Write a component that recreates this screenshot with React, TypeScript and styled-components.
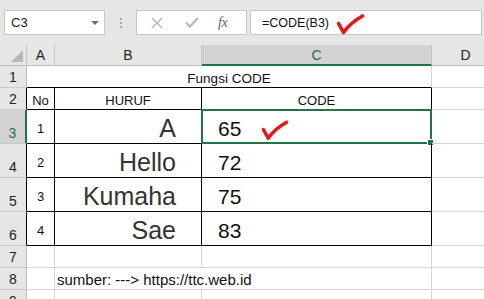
import React from 'react';
import styled, { createGlobalStyle } from 'styled-components';

const GlobalStyle = createGlobalStyle`
  html, body {
    margin: 0;
    padding: 0;
    background: #ffffff;
    overflow: hidden;
  }
  body {
    font-family: "Liberation Sans", Arial, sans-serif;
  }
`;

const green = '#217346';
const grid = '#d4d4d4';

const Window = styled.div`
  width: 484px;
  height: 299px;
  overflow: hidden;
  background: #ffffff;
`;

const TopBar = styled.div`
  height: 45px;
  background: #e6e6e6;
  display: flex;
  align-items: flex-start;
  padding: 10px 2px 0 4px;
  box-sizing: border-box;
`;

const NameBox = styled.div`
  width: 101px;
  height: 25px;
  box-sizing: border-box;
  background: #fff;
  border: 1px solid #c6c6c6;
  display: flex;
  align-items: center;
  justify-content: space-between;
  padding: 0 5px 0 6px;
  font-size: 13px;
  color: #222;
`;

const DropArrow = styled.span`
  width: 0;
  height: 0;
  border-left: 4px solid transparent;
  border-right: 4px solid transparent;
  border-top: 4px solid #6f6f6f;
`;

const Grip = styled.div`
  width: 31px;
  height: 25px;
  display: flex;
  flex-direction: column;
  align-items: center;
  justify-content: center;
  gap: 2px;
  span {
    width: 2px;
    height: 2px;
    background: #a8a8a8;
  }
`;

const FormulaButtons = styled.div`
  width: 111px;
  height: 25px;
  box-sizing: border-box;
  background: #fff;
  border: 1px solid #c6c6c6;
  display: flex;
  align-items: center;
  padding-left: 14px;
  gap: 22px;
  svg {
    display: block;
  }
`;

const Fx = styled.span`
  font-family: "Liberation Serif", "Times New Roman", serif;
  font-style: italic;
  font-size: 14px;
  color: #666;
  margin-left: -3px;
  letter-spacing: -0.5px;
`;

const FormulaInput = styled.div`
  flex: 1;
  height: 25px;
  margin-left: 3px;
  box-sizing: border-box;
  background: #fff;
  border: 1px solid #c6c6c6;
  display: flex;
  align-items: center;
  padding-left: 11px;
  font-size: 12.5px;
  color: #111;
`;

const Sheet = styled.div`
  display: grid;
  grid-template-columns: 27px 28px 147px 230px 68px;
  grid-template-rows: 21px 22px 22px 34px 34px 34px 34px 22px 22px 22px;
  width: 500px;
`;

const ColHead = styled.div<{ $sel?: boolean }>`
  box-sizing: border-box;
  background: ${p => (p.$sel ? '#d2d2d2' : '#e6e6e6')};
  border-right: 1px solid #c3c3c3;
  border-bottom: ${p => (p.$sel ? `2px solid ${green}` : '1px solid #bdbdbd')};
  display: flex;
  align-items: center;
  justify-content: center;
  font-size: 14px;
  color: ${p => (p.$sel ? green : '#222')};
`;

const Corner = styled.div`
  box-sizing: border-box;
  background: #e6e6e6;
  border-right: 1px solid #c3c3c3;
  border-bottom: 1px solid #bdbdbd;
  position: relative;
  &::after {
    content: '';
    position: absolute;
    right: 3px;
    bottom: 3px;
    width: 0;
    height: 0;
    border-left: 12px solid transparent;
    border-bottom: 12px solid #b8b8b8;
  }
`;

const RowHead = styled.div<{ $sel?: boolean; $edge?: boolean }>`
  box-sizing: border-box;
  background: ${p => (p.$sel ? '#d2d2d2' : '#e6e6e6')};
  border-bottom: 1px solid #c9c9c9;
  border-right: ${p =>
    p.$sel ? `2px solid ${green}` : p.$edge ? '1px solid #000' : '1px solid #bdbdbd'};
  display: flex;
  align-items: flex-end;
  justify-content: center;
  padding-bottom: 2px;
  font-size: 14px;
  color: ${p => (p.$sel ? green : '#222')};
`;

const Cell = styled.div<{
  $span?: number;
  $box?: boolean;
  $top?: boolean;
  $open?: boolean;
  $align?: 'left' | 'center' | 'right';
  $pb?: number;
}>`
  box-sizing: border-box;
  grid-column: span ${p => p.$span ?? 1};
  border-right: ${p => (p.$open ? 'none' : `1px solid ${p.$box ? '#000' : grid}`)};
  border-bottom: 1px solid ${p => (p.$box || p.$top ? '#000' : grid)};
  display: flex;
  align-items: flex-end;
  justify-content: ${p =>
    p.$align === 'center' ? 'center' : p.$align === 'right' ? 'flex-end' : 'flex-start'};
  padding: 0 2px ${p => p.$pb ?? 1}px 2px;
  font-size: 13px;
  color: #111;
  white-space: nowrap;
  position: relative;
`;

const Small = styled.span<{ $size?: number }>`
  font-size: ${p => p.$size ?? 13}px;
`;

const Word = styled.span`
  font-family: "Liberation Sans", Arial, sans-serif;
  font-size: 25px;
  color: #333;
  padding-right: 23px;
`;

const Code = styled.span`
  font-size: 21px;
  color: #111;
  padding-left: 14px;
  display: flex;
  align-items: center;
`;

const Selection = styled.div`
  position: absolute;
  top: -1px;
  left: -1px;
  right: -1px;
  bottom: -1px;
  border: 2px solid ${green};
  pointer-events: none;
  &::after {
    content: '';
    position: absolute;
    right: -4px;
    bottom: -4px;
    width: 5px;
    height: 5px;
    background: ${green};
    border: 1px solid #fff;
  }
`;

const Overflow = styled.span`
  position: relative;
  z-index: 1;
`;

const CheckWrap = styled.span<{ $ml: number }>`
  margin-left: ${p => p.$ml}px;
  margin-top: 2px;
  display: flex;
`;

function RedCheck({ w = 30, h = 22 }: { w?: number; h?: number }) {
  return (
    <svg width={w} height={h} viewBox="0 0 30 22" fill="none">
      <path
        d="M3.5 10.5 L8.5 19.5 Q15 10 27.5 3"
        stroke="#e8141b"
        strokeWidth="3.6"
        strokeLinecap="round"
        strokeLinejoin="round"
      />
    </svg>
  );
}

function CrossIcon() {
  return (
    <svg width="12" height="12" viewBox="0 0 12 12">
      <path d="M1 1 L11 11 M11 1 L1 11" stroke="#b4b4b4" strokeWidth="1.4" />
    </svg>
  );
}

function TickIcon() {
  return (
    <svg width="14" height="11" viewBox="0 0 14 11">
      <path d="M1 5.5 L5 9.5 L13 1" stroke="#b4b4b4" strokeWidth="2" fill="none" />
    </svg>
  );
}

const rows = [
  { n: 1, word: 'A', code: 65 },
  { n: 2, word: 'Hello', code: 72 },
  { n: 3, word: 'Kumaha', code: 75 },
  { n: 4, word: 'Sae', code: 83 },
];

export default function App() {
  return (
    <Window>
      <GlobalStyle />
      <TopBar>
        <NameBox>
          C3
          <DropArrow />
        </NameBox>
        <Grip>
          <span />
          <span />
          <span />
        </Grip>
        <FormulaButtons>
          <CrossIcon />
          <TickIcon />
          <Fx>fx</Fx>
        </FormulaButtons>
        <FormulaInput>
          =CODE(B3)
          <CheckWrap $ml={6}>
            <RedCheck />
          </CheckWrap>
        </FormulaInput>
      </TopBar>

      <Sheet>
        <Corner />
        <ColHead>A</ColHead>
        <ColHead>B</ColHead>
        <ColHead $sel>C</ColHead>
        <ColHead>D</ColHead>

        <RowHead>1</RowHead>
        <Cell $span={3} $top $align="center">
          <Small $size={13.5}>Fungsi CODE</Small>
        </Cell>
        <Cell />

        <RowHead $edge>2</RowHead>
        <Cell $box $align="center">No</Cell>
        <Cell $box $align="center">HURUF</Cell>
        <Cell $box $align="center">CODE</Cell>
        <Cell />

        {rows.map((r, i) => (
          <React.Fragment key={r.n}>
            <RowHead $edge={i !== 0} $sel={i === 0}>
              {i + 3}
            </RowHead>
            <Cell $box $align="center" $pb={7}>
              {r.n}
            </Cell>
            <Cell $box $align="right" $pb={0}>
              <Word>{r.word}</Word>
            </Cell>
            <Cell $box $pb={2}>
              <Code>
                {r.code}
                {i === 0 && (
                  <CheckWrap $ml={19}>
                    <RedCheck w={29} h={22} />
                  </CheckWrap>
                )}
              </Code>
              {i === 0 && <Selection />}
            </Cell>
            <Cell />
          </React.Fragment>
        ))}

        <RowHead>7</RowHead>
        <Cell />
        <Cell />
        <Cell />
        <Cell />

        <RowHead>8</RowHead>
        <Cell />
        <Cell $open>
          <Overflow>
            <Small $size={15}>sumber: ---&gt; https://ttc.web.id</Small>
          </Overflow>
        </Cell>
        <Cell />
        <Cell />

        <RowHead>9</RowHead>
        <Cell />
        <Cell />
        <Cell />
        <Cell />
      </Sheet>
    </Window>
  );
}
